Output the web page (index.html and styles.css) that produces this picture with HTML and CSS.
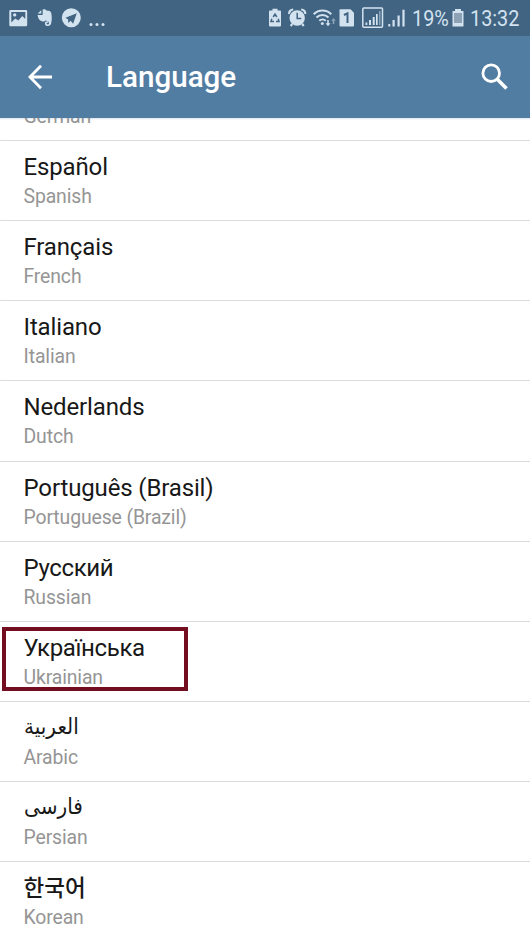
FILE: index.html
```
<!DOCTYPE html>
<html lang="en">
<head>
<meta charset="utf-8">
<title>Language</title>
<link rel="stylesheet" href="styles.css">
</head>
<body>
<div class="status">
  <svg class="status-icons" width="110" height="36" viewBox="0 0 110 36" fill="#d3e2ef">
    <path fill-rule="evenodd" d="M10.500 10H26a1.200 1.200 0 0 1 1.200 1.200V25a1.200 1.200 0 0 1-1.200 1.200H10.500A1.200 1.200 0 0 1 9.300 25V11.200A1.200 1.200 0 0 1 10.500 10zM11.300 12v10.500l4-4 3 2 4-4.500 3 3V12zM14.700 13.200a1.700 1.700 0 1 1 0 3.400 1.700 1.700 0 0 1 0-3.400z"/>
    <path d="M41.300 10.300v3.300h-3.800zM42.700 9.500c1.900-.4 3 .1 3.700 1.100 2.800.1 4.300.7 4.800 2.400.8 3.400.7 7.200 0 10.300-.5 1.900-1.600 2.700-3.200 2.700-2 0-3.100-1-3.100-2.600s1.200-2.300 3.200-2.100v1.500c-1-.1-1.600.1-1.500.8 0 .6.500.8 1.200.8 1.200 0 1.400-1.100.9-2.500-.6-1.500-2-.9-3.400-1.500-.5 1.100-1.500 1.300-2.700 1-2.900-.5-4.600-2.800-5-6.500h4.100c.7 0 1-.3 1-1z"/>
    <path fill-rule="evenodd" d="M71.300 8.200a9.500 9.500 0 1 1 0 19 9.500 9.500 0 0 1 0-19zM65.500 17.700l11.300-4.500-3.700 10.600-2.500-3-2.300 2.200-.2-3.400z"/>
    <circle cx="91" cy="24.500" r="1.500"/><circle cx="97" cy="24.500" r="1.500"/><circle cx="103" cy="24.500" r="1.500"/>
  </svg>
  <svg class="status-icons" width="140" height="36" viewBox="266 0 140 36" fill="#d3e2ef">
    <path d="M272.500 9.500V8.800h5v1.700h2.500a1 1 0 0 1 1 1V25.500a1 1 0 0 1-1 1h-10a1 1 0 0 1-1-1v-14a1 1 0 0 1 1-1h2.500z"/>
    <path d="M273.200 17l1.800-2.800 1.800 2.800M271.800 18.800l-.8 2.600h3M278.200 18.800l.8 2.600h-3" fill="none" stroke="#416483" stroke-width="1.500"/>
    <circle cx="297.200" cy="18" r="7.700"/>
    <path d="M289.200 14a4 4 0 0 1 4-4.500M305.200 14a4 4 0 0 0-4-4.500M292.200 24l-1.500 2M302.200 24l1.500 2" fill="none" stroke="#d3e2ef" stroke-width="2.200"/>
    <path d="M297.200 12.800v5.700h4" fill="none" stroke="#416483" stroke-width="1.500"/>
    <g fill="none" stroke="#d3e2ef" stroke-width="2">
      <path d="M313.700 14.200a12.500 12.500 0 0 1 17.600 0M316.500 17.500a8.500 8.500 0 0 1 12 0M319.300 20.700a4.600 4.600 0 0 1 6.400 0"/>
    </g>
    <circle cx="322.300" cy="23.500" r="1.500"/>
    <path d="M327.200 20h1.600v3.300h1.700l-2.500 3-2.500-3h1.700z"/>
    <path opacity=".5" d="M332.700 24h1.600v-3.300h1.500l-2.300-2.700-2.300 2.700h1.500z"/>
    <path d="M340.500 9.300h10l3.500 3.500v12.700a1 1 0 0 1-1 1h-12.500a1 1 0 0 1-1-1V10.300a1 1 0 0 1 1-1z"/>
    <path d="M344 15l3.500-1.700V23" fill="none" stroke="#416483" stroke-width="2"/>
    <rect x="362.800" y="8" width="19.700" height="19.200" rx="1" fill="none" stroke="#d3e2ef" stroke-width="1.500"/>
    <path d="M365.500 22.500h1.800v2.500h-1.800zM369 20h2v5h-2zM372.700 17h2v8h-2z"/><path d="M379 11h1.500v14H379z" opacity=".5"/><path d="M376 14h1.700v11H376z"/>
    <path d="M388.300 24h2v2.500h-2zM392.500 20h2.200v6.500h-2.200zM397.500 15.500h2.200v11h-2.200zM402.400 9.700h2.200v16.800h-2.200z"/>
  </svg>
  <span class="battery-text">19%</span>
  <svg class="battery" width="12" height="36" viewBox="0 0 12 36"><path d="M3 9h6v2h2.500v15.500H.5V11H3z" fill="#d3e2ef"/><path d="M2 13h8v10H2z" fill="#8ca3b6"/></svg>
  <span class="clock">13:32</span>
</div>
<header class="bar">
  <svg width="26" height="26" viewBox="0 0 26 26" fill="none" stroke="#fff" stroke-width="2.800"><path d="M14 1.800L3 13l11 11.200M3.500 13H25"/></svg>
  <h1>Language</h1>
  <svg class="search" width="28" height="28" viewBox="0 0 28 28" fill="none" stroke="#fff"><circle cx="10.200" cy="10.200" r="8.300" stroke-width="2.800"/><path d="M16.500 16.500l9 9" stroke-width="3.600"/></svg>
</header>
<main class="list">
  <div class="row"><div class="sub">German</div></div>
  <div class="row"><div class="name">Español</div><div class="sub">Spanish</div></div>
  <div class="row"><div class="name">Français</div><div class="sub">French</div></div>
  <div class="row"><div class="name">Italiano</div><div class="sub">Italian</div></div>
  <div class="row"><div class="name">Nederlands</div><div class="sub">Dutch</div></div>
  <div class="row"><div class="name">Português (Brasil)</div><div class="sub">Portuguese (Brazil)</div></div>
  <div class="row"><div class="name cyrillic">Русский</div><div class="sub">Russian</div></div>
  <div class="row marked"><div class="name cyrillic">Українська</div><div class="sub">Ukrainian</div></div>
  <div class="row"><div class="name arabic" lang="ar">العربية</div><div class="sub">Arabic</div></div>
  <div class="row"><div class="name arabic" lang="fa">فارسی</div><div class="sub">Persian</div></div>
  <div class="row"><div class="name korean" lang="ko">한국어</div><div class="sub">Korean</div></div>
</main>
</body>
</html>
```
FILE: styles.css
```
*, *::after { box-sizing: border-box; }
body {
  margin: 0;
  height: 942px;
  overflow: hidden;
  display: flex;
  flex-direction: column;
  background: #fff;
  font-family: Roboto, "Noto Sans CJK KR", "DejaVu Sans", sans-serif;
}
.status {
  flex: none;
  height: 36px;
  display: flex;
  align-items: center;
  background: #416483;
  color: #d3e2ef;
  font-size: 22.5px;
  line-height: 36px;
  white-space: nowrap;
}
.status svg { flex: none; }
.status-icons + .status-icons { margin-left: 156px; }
.battery-text, .clock { transform: scaleX(.88); transform-origin: left; }
.battery-text { flex: none; width: 40px; margin-left: 6px; }
.clock { margin-left: 6px; }
.bar {
  flex: none;
  height: 82px;
  display: flex;
  align-items: center;
  padding: 0 21px 1px 27px;
  background: #527da3;
  color: #fff;
}
.bar h1 {
  margin: 0 0 0 53px;
  font-size: 29.6px;
  font-weight: 500;
  line-height: 40px;
}
.search { margin-left: auto; }
.list { flex: 1; min-height: 0; overflow: hidden; box-shadow: inset 0 2px 2px -1px #dde5ef; }
.row {
  height: 80.2px;
  padding: 10px 24px 0 23.5px;
  border-bottom: 1px solid #dcdcdc;
}
.row:first-child {
  display: flow-root;
  height: 22.8px;
  padding-top: 0;
}
.row:first-child .sub { margin-top: -15px; }
.row:last-child { border-bottom: 0; }
.name {
  height: 32px;
  font-size: 24px;
  line-height: 32px;
  letter-spacing: -.14px;
  color: #181818;
  white-space: nowrap;
}
.cyrillic { letter-spacing: -.35px; }
.arabic {
  font-size: 22px;
  line-height: 29px;
  letter-spacing: 0;
  transform: scaleX(.91);
  transform-origin: left;
}
.korean { font-size: 22.5px; font-weight: 500; letter-spacing: 0; line-height: 33px; }
.sub {
  height: 27px;
  font-size: 19.4px;
  line-height: 27px;
  letter-spacing: -.12px;
  color: #959595;
  white-space: nowrap;
}
.marked { position: relative; }
.marked::after {
  content: "";
  position: absolute;
  left: 2px;
  top: 5px;
  width: 186px;
  height: 64px;
  border: 4px solid #730d20;
}
```
